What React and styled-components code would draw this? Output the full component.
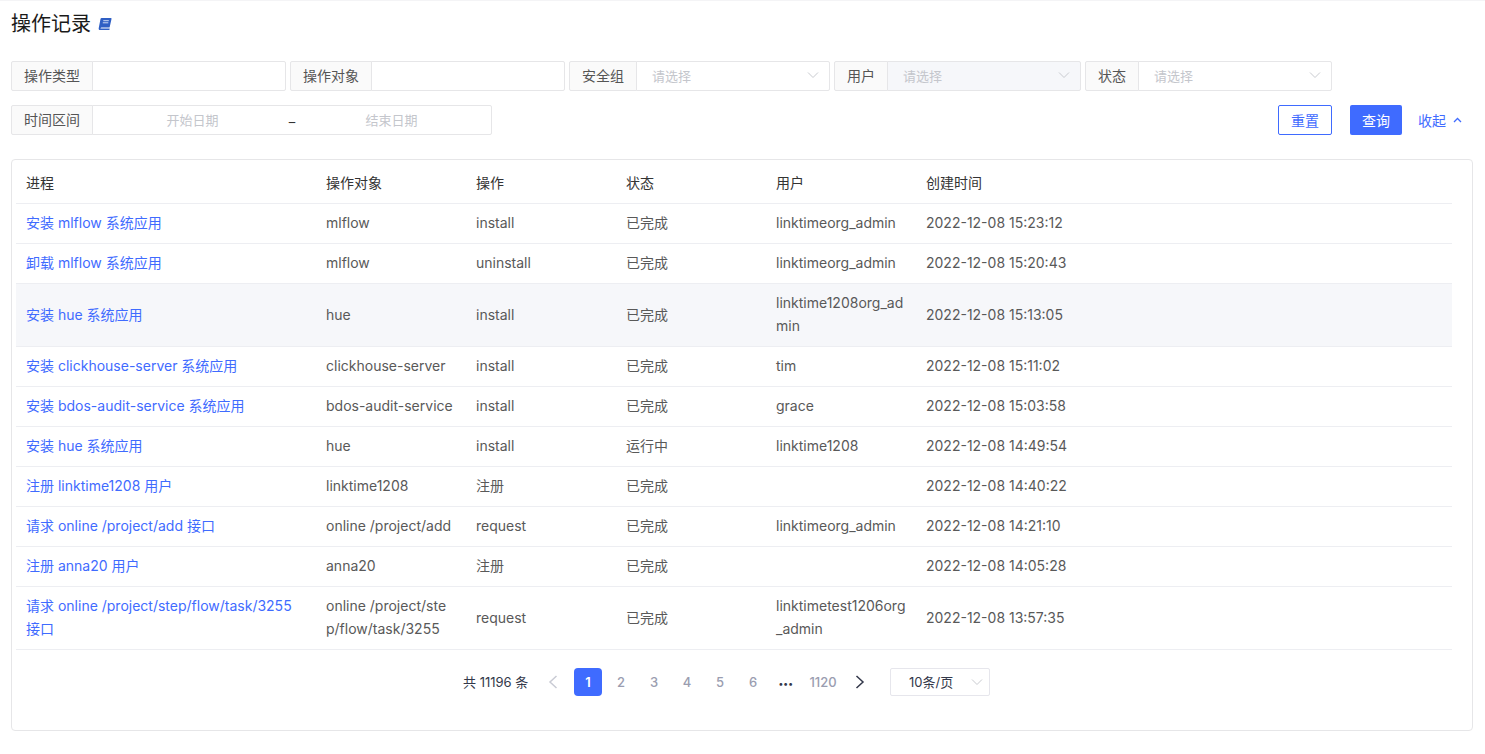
import React from 'react';
import styled, { createGlobalStyle } from 'styled-components';

const Global = createGlobalStyle`
  html, body { margin: 0; padding: 0; background: #fff; }
  body { font-family: Inter, "Noto Sans CJK SC", "Liberation Sans", sans-serif; font-size: 14px; color: #333; }
  * { box-sizing: border-box; }
`;

const Page = styled.div`
  width: 1485px;
  height: 754px;
  padding: 0 12px 0 11px;
  overflow: hidden;
  border-top: 1px solid #f4f4f6;
`;
const TitleRow = styled.div`
  display: flex;
  align-items: center;
  gap: 7px;
  height: 46px;
  margin-bottom: 14px;
`;
const Title = styled.h1`
  margin: 0;
  font-size: 20px;
  font-weight: 400;
  line-height: 46px;
  color: #1a1a1a;
`;
const FilterRow = styled.div`
  display: flex;
  gap: 4px;
  height: 30px;
  margin-bottom: 14px;
`;
const Field = styled.div`
  display: flex;
  width: ${p => p.$w}px;
  height: 30px;
`;
const Label = styled.div`
  flex: none;
  display: flex;
  align-items: center;
  padding: 0 12px;
  background: #fafafa;
  border: 1px solid #e6e6e8;
  border-radius: 2px 0 0 2px;
  color: #555;
  line-height: 1;
`;
const Control = styled.div`
  flex: 1;
  display: flex;
  align-items: center;
  justify-content: space-between;
  padding: 0 10px 2px 15px;
  margin-left: -1px;
  border: 1px solid #e6e6e8;
  border-radius: 0 2px 2px 0;
  background: ${p => (p.$disabled ? '#f6f7fa' : '#fff')};
  font-size: 13px;
  color: #c4c6cc;
`;
const Arrow = styled.svg`
  width: 12px;
  height: 8px;
  fill: none;
  stroke: #c9cbd0;
  stroke-width: 1;
`;
const DateControl = styled(Control)`
  padding: 0 0 2px;
  justify-content: flex-start;
`;
const DateText = styled.span`
  width: 199px;
  text-align: center;
`;
const DateSep = styled.span`
  color: #333;
  width: 0;
  padding-top: 5px;
  display: flex;
  justify-content: center;
`;
const Spacer = styled.div`flex: 1;`;
const Actions = styled.div`
  display: flex;
  align-items: center;
  width: 195px;
`;
const OutlineButton = styled.div`
  width: 54px;
  height: 30px;
  display: flex;
  align-items: center;
  justify-content: center;
  border: 1px solid #3f6bff;
  border-radius: 2px;
  color: #3f6bff;
  margin-right: 18px;
`;
const SolidButton = styled.div`
  width: 52px;
  height: 30px;
  display: flex;
  align-items: center;
  justify-content: center;
  border-radius: 2px;
  background: #3f6bff;
  color: #fff;
  margin-right: 16px;
`;
const Collapse = styled.div`
  display: flex;
  align-items: center;
  gap: 7px;
  color: #3f6bff;
`;
const Card = styled.div`
  margin-top: 24px;
  height: 572px;
  border: 1px solid #e6e6e8;
  border-radius: 4px;
  padding: 3px 20px 0 4px;
`;
const Table = styled.table`
  width: 100%;
  table-layout: fixed;
  border-collapse: collapse;
`;
const Th = styled.th`
  width: ${p => (p.$w ? `${p.$w}px` : 'auto')};
  height: 40px;
  padding: 8px 10px;
  text-align: left;
  font-weight: 400;
  line-height: 23px;
  color: #333;
  border-bottom: 1px solid #edeef2;
`;
const Tr = styled.tr`
  background: ${p => (p.$hover ? '#f6f7fa' : 'transparent')};
`;
const Td = styled.td`
  padding: 7.5px 10px 8.5px;
  line-height: 23px;
  color: #595959;
  border-bottom: 1px solid #edeef2;
  word-break: break-all;
  vertical-align: middle;
`;
const LinkText = styled.span`
  color: #3f6bff;
`;
const Pager = styled.div`
  display: flex;
  align-items: center;
  height: 28px;
  margin-top: 18px;
  padding-left: 447px;
  font-size: 13px;
`;
const Total = styled.span`
  width: 66px;
  white-space: nowrap;
  color: #33384a;
  margin-right: 10px;
`;
const PageIcon = styled.svg`
  flex: none;
  width: 28px;
  height: 28px;
  margin-left: ${p => p.$ml ?? 0}px;
  fill: none;
  stroke: ${p => p.$c};
  stroke-width: 1.5;
`;
const PageItem = styled.div`
  flex: none;
  width: ${p => p.$w ?? 28}px;
  height: 28px;
  margin-left: ${p => p.$ml ?? 5}px;
  display: flex;
  align-items: center;
  justify-content: center;
  border-radius: 4px;
  font-weight: ${p => (p.$active ? 600 : 500)};
  background: ${p => (p.$active ? '#3f6bff' : 'transparent')};
  color: ${p => (p.$active ? '#fff' : '#9a9db0')};
`;
const Dots = styled(PageItem)`
  color: #33384a;
  font-weight: 700;
  font-size: 9px;
  padding-top: 4px;
  letter-spacing: 0.5px;
`;
const SizeSelect = styled.div`
  width: 100px;
  height: 28px;
  margin-left: 16px;
  padding: 0 6px 0 18px;
  display: flex;
  align-items: center;
  justify-content: space-between;
  border: 1px solid #e6e6ec;
  border-radius: 2px;
  color: #33384a;
`;

const columns = [300, 150, 150, 150, 150, 0];
const headers = ['进程', '操作对象', '操作', '状态', '用户', '创建时间'];
const rows = [
  ['安装 mlflow 系统应用', 'mlflow', 'install', '已完成', 'linktimeorg_admin', '2022-12-08 15:23:12'],
  ['卸载 mlflow 系统应用', 'mlflow', 'uninstall', '已完成', 'linktimeorg_admin', '2022-12-08 15:20:43'],
  ['安装 hue 系统应用', 'hue', 'install', '已完成', 'linktime1208org_admin', '2022-12-08 15:13:05'],
  ['安装 clickhouse-server 系统应用', 'clickhouse-server', 'install', '已完成', 'tim', '2022-12-08 15:11:02'],
  ['安装 bdos-audit-service 系统应用', 'bdos-audit-service', 'install', '已完成', 'grace', '2022-12-08 15:03:58'],
  ['安装 hue 系统应用', 'hue', 'install', '运行中', 'linktime1208', '2022-12-08 14:49:54'],
  ['注册 linktime1208 用户', 'linktime1208', '注册', '已完成', '', '2022-12-08 14:40:22'],
  ['请求 online /project/add 接口', 'online /project/add', 'request', '已完成', 'linktimeorg_admin', '2022-12-08 14:21:10'],
  ['注册 anna20 用户', 'anna20', '注册', '已完成', '', '2022-12-08 14:05:28'],
  ['请求 online /project/step/flow/task/3255 接口', 'online /project/step/flow/task/3255', 'request', '已完成', 'linktimetest1206org_admin', '2022-12-08 13:57:35'],
];

const Down = () => (
  <Arrow viewBox="0 0 12 8"><path d="M1 1.500 6 6.500 11 1.500" /></Arrow>
);

const Select = ({ label, w, disabled }) => (
  <Field $w={w}>
    <Label>{label}</Label>
    <Control $disabled={disabled}>请选择<Down /></Control>
  </Field>
);

const Input = ({ label }) => (
  <Field $w={275}>
    <Label>{label}</Label>
    <Control />
  </Field>
);

export default function App() {
  return (
    <Page>
      <Global />
      <TitleRow>
        <Title>操作记录</Title>
        <svg width="14" height="14" viewBox="0 0 14 14">
          <path d="M3.600 1h9.200c.5 0 .8.4.7.9l-1.900 8.600H4c-.9 0-1.400.4-1.500 1h9.200l-.3 1.500H2.200C1 13 .5 12.200.7 11.200L2.500 2C2.600 1.400 3 1 3.600 1Z" fill="#2f5fc4" />
          <path d="M5.300 3.700h5.500M4.800 5.800h5.500" stroke="#dfe8fa" strokeWidth=".9" fill="none" />
        </svg>
      </TitleRow>
      <FilterRow>
        <Input label="操作类型" />
        <Input label="操作对象" />
        <Select label="安全组" w={261} />
        <Select label="用户" w={247} disabled />
        <Select label="状态" w={247} />
      </FilterRow>
      <FilterRow>
        <Field $w={481}>
          <Label>时间区间</Label>
          <DateControl>
            <DateText>开始日期</DateText>
            <DateSep>–</DateSep>
            <DateText>结束日期</DateText>
          </DateControl>
        </Field>
        <Spacer />
        <Actions>
          <OutlineButton>重置</OutlineButton>
          <SolidButton>查询</SolidButton>
          <Collapse>
            收起
            <svg width="9" height="6" viewBox="0 0 9 6" fill="none" stroke="#3f6bff" strokeWidth="1.300"><path d="M1 5 4.500 1.500 8 5" /></svg>
          </Collapse>
        </Actions>
      </FilterRow>
      <Card>
        <Table>
          <thead>
            <tr>
              {headers.map((h, i) => <Th key={h} $w={columns[i]}>{h}</Th>)}
            </tr>
          </thead>
          <tbody>
            {rows.map((r, i) => (
              <Tr key={i} $hover={i === 2}>
                <Td><LinkText>{r[0]}</LinkText></Td>
                {r.slice(1).map((c, j) => <Td key={j}>{c}</Td>)}
              </Tr>
            ))}
          </tbody>
        </Table>
        <Pager>
          <Total>共 11196 条</Total>
          <PageIcon $c="#c9cbd4" viewBox="0 0 28 28"><path d="M17.500 8 11 14 17.500 20" /></PageIcon>
          <PageItem $active $ml={7}>1</PageItem>
          {[2, 3, 4, 5, 6].map(n => <PageItem key={n}>{n}</PageItem>)}
          <Dots>•••</Dots>
          <PageItem $w={36}>1120</PageItem>
          <PageIcon $c="#33384a" $ml={5} viewBox="0 0 28 28"><path d="M10.500 8 17 14 10.500 20" /></PageIcon>
          <SizeSelect>10条/页<Down /></SizeSelect>
        </Pager>
      </Card>
    </Page>
  );
}
